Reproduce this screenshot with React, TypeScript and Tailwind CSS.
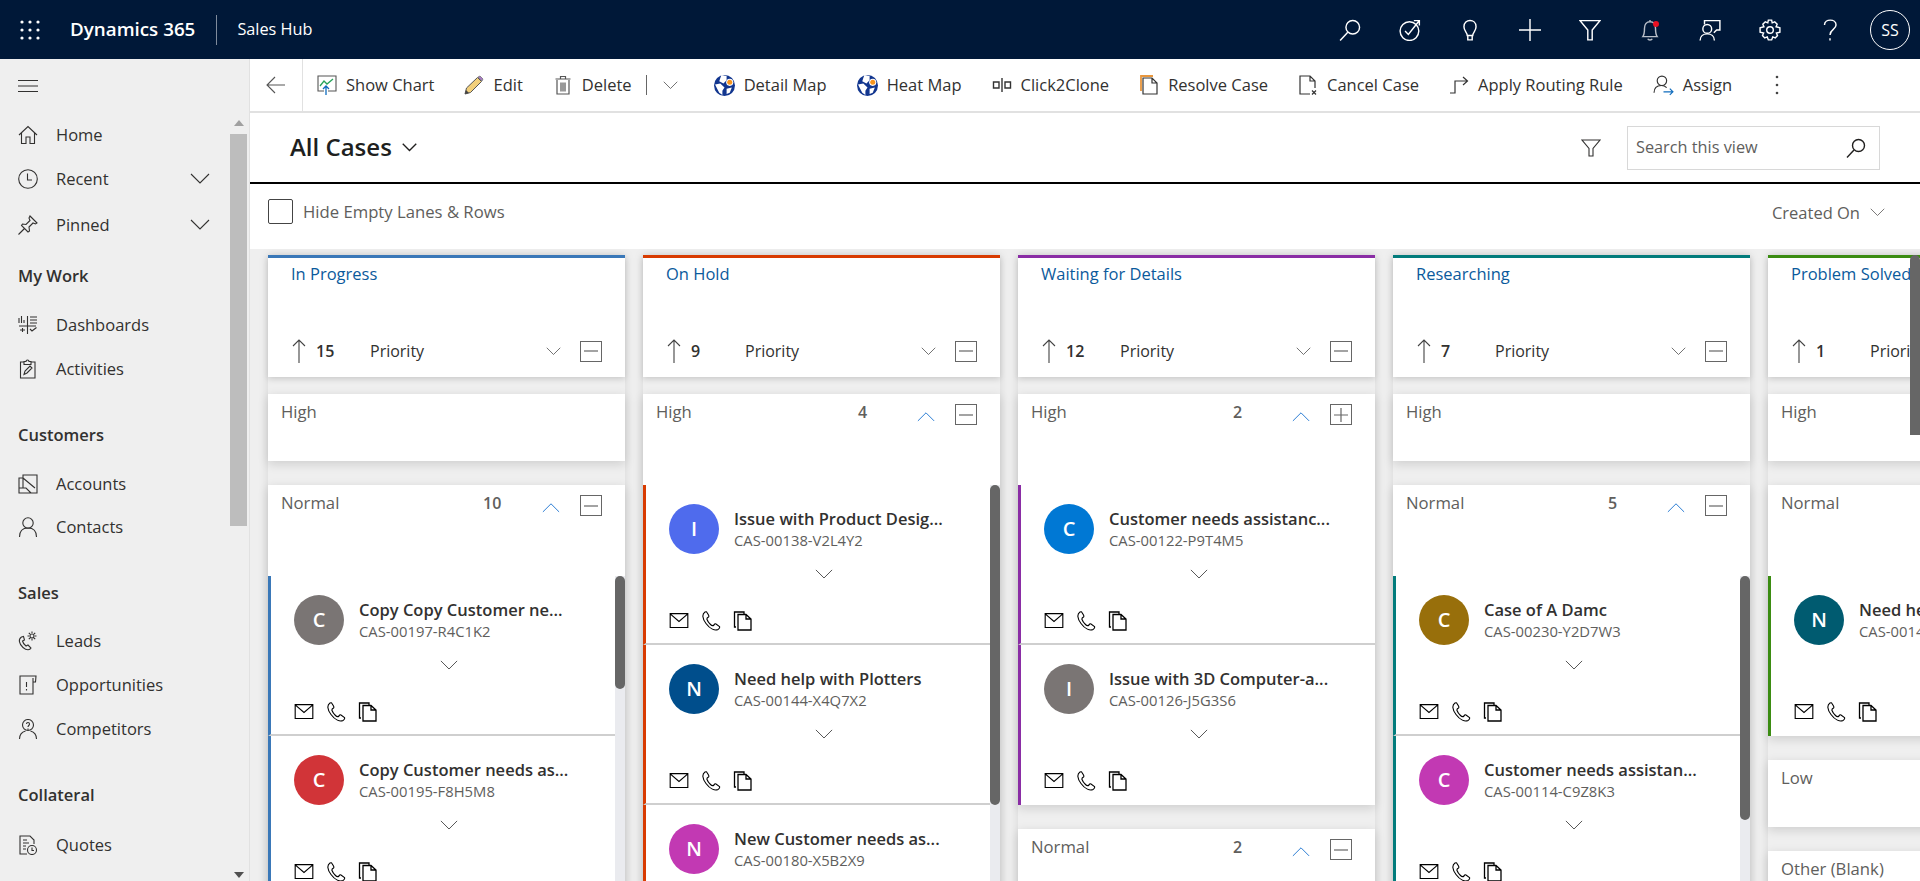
import { ReactNode } from "react";

const font = { fontFamily: '"Open Sans", "Noto Sans", sans-serif' };

function Ico({ children, size = 20, className = "", sw = 1.2 }: { children: ReactNode; size?: number; className?: string; sw?: number }) {
  return (
    <svg viewBox="0 0 20 20" width={size} height={size} fill="none" stroke="currentColor" strokeWidth={sw} className={`shrink-0 ${className}`}>
      {children}
    </svg>
  );
}

function Chevron({ size = 20, up = false, className = "", sw = 1.1 }: { size?: number; up?: boolean; className?: string; sw?: number }) {
  return (
    <svg viewBox="0 0 20 12" width={size} height={(size * 12) / 20} fill="none" stroke="currentColor" strokeWidth={sw} className={`shrink-0 ${className}`}>
      <path d={up ? "M1 11 L10 2 L19 11" : "M1 1 L10 10 L19 1"} />
    </svg>
  );
}

function Globe() {
  return (
    <svg viewBox="0 0 20 20" width={21} height={21} className="shrink-0">
      <circle cx="10" cy="10" r="10" fill="#12368f" />
      <path d="M7 0 L12 1 L12 5 L9 8 L5 6 Z M1 9 L6 8 L10 12 L8 15 L8 19 L5 17 L3 13 Z M12 13 L17 12 L15 17 L12 18 Z" fill="#ffffff" />
      <circle cx="15" cy="7" r="3.4" fill="#ffffff" />
      <circle cx="15" cy="7" r="2.4" fill="#f7941d" />
    </svg>
  );
}

const toolbarItems: { label: string; icon: ReactNode }[] = [
  {
    label: "Show Chart",
    icon: (
      <svg viewBox="0 0 20 20" width={20} height={20} fill="none" className="shrink-0">
        <path d="M7 16 H1 V1 H19 V16 H11" stroke="#555" strokeWidth="1.1" />
        <path d="M3 11 L7 6 L10 9 L16 4" stroke="#27a35a" strokeWidth="1.3" />
        <path d="M9 20 V11 M6 14 L9 11 L12 14" stroke="#0f6cbd" strokeWidth="1.3" />
      </svg>
    ),
  },
  {
    label: "Edit",
    icon: (
      <svg viewBox="0 0 20 20" width={20} height={20} className="shrink-0">
        <path d="M1 19 L2.5 13 L13.5 2.5 L17.5 6.5 L6.5 17.5 Z" fill="#f2cf7a" stroke="#555" strokeWidth="1" />
        <path d="M14 2 L16 1 L19 4 L18 6 Z" fill="#a878c8" stroke="#777" strokeWidth="0.8" />
        <path d="M1 19 L2 15 L5 18 Z" fill="#444" />
      </svg>
    ),
  },
  {
    label: "Delete",
    icon: (
      <Ico className="text-[#555]">
        <path d="M4 5 V19 H16 V5 M2.5 4 H17.5 M7.5 4 V1.5 H12.5 V4 M8 7.5 V16.5 M10 7.5 V16.5 M12 7.5 V16.5" />
      </Ico>
    ),
  },
];

const toolbarRest: { label: string; icon: ReactNode }[] = [
  { label: "Detail Map", icon: <Globe /> },
  { label: "Heat Map", icon: <Globe /> },
  {
    label: "Click2Clone",
    icon: (
      <Ico className="text-[#333]" sw={1.4}>
        <path d="M10 3 V17 M1.5 7 H7 V13 H1.5 Z M13 7 H18.5 V13 H13 Z" />
      </Ico>
    ),
  },
  {
    label: "Resolve Case",
    icon: (
      <svg viewBox="0 0 20 20" width={20} height={20} fill="none" className="shrink-0">
        <path d="M2 16 V1 H14" stroke="#e8963c" strokeWidth="1.8" />
        <path d="M4 19 V3 H13 L18 8 V19 Z M13 3 V8 H18" stroke="#333" strokeWidth="1.2" fill="#fff" />
      </svg>
    ),
  },
  {
    label: "Cancel Case",
    icon: (
      <Ico className="text-[#333]">
        <path d="M12 19 H2 V1 H12 L17 6 V13 M12 1 V6 H17 M14 15.5 L18 19.5 M18 15.5 L14 19.5" />
      </Ico>
    ),
  },
  {
    label: "Apply Routing Rule",
    icon: (
      <Ico className="text-[#333]">
        <path d="M1 18 H6 V6 H18 M14 2 L18.5 6 L14 10" />
      </Ico>
    ),
  },
  {
    label: "Assign",
    icon: (
      <svg viewBox="0 0 20 20" width={21} height={21} fill="none" className="shrink-0">
        <circle cx="8.5" cy="5.5" r="4.5" stroke="#333" strokeWidth="1.1" />
        <path d="M1 17 C1 12 4 10 8 10 C10 10 12 11 13 12" stroke="#333" strokeWidth="1.1" />
        <path d="M10 16 H19 M16 13 L19 16 L16 19" stroke="#0f6cbd" strokeWidth="1.1" />
      </svg>
    ),
  },
];

const navIcons: Record<string, ReactNode> = {
  Home: <path d="M1 10 L10 1.5 L19 10 M3.5 8 V18.5 H8 V12 H12 V18.5 H16.5 V8" />,
  Recent: (
    <>
      <circle cx="10" cy="10" r="9.3" />
      <path d="M9.5 4.5 V11 H14" />
    </>
  ),
  Pinned: <path d="M12 1 L19 8 L17.5 9 L15 8 L11 12 L11.5 16 L10 17 L3.5 10.5 L4.5 9 L8 9.5 L12 5.5 L11 3 Z M6.5 13.5 L0.5 19.5" />,
  Dashboards: <path d="M1 8 V3 M3.5 8 V1 M6 8 V5 M9.5 1 V19 M12 2 H19 M12 5 H19 M12 8 H19 M1 11 H18 M2 15 H7 M4.5 13 V17 M12 14 L14 16 L18.5 12.5" />,
  Activities: <path d="M6 3 H2.5 V19 H17 V3 H13 M6 5.5 V2.5 H8 C8 0.5 11 0.5 11 2.5 H13 V5.5 Z M6 15.5 L7 12 L12 7 L14 9 L9 14 Z" />,
  Accounts: <path d="M5 14 V1 H19 V19 H1 V4 H5 M5 4 L17 14 M1 14 H8 L13 19" />,
  Contacts: (
    <>
      <circle cx="10" cy="6" r="5.2" />
      <path d="M1.5 20 C1.5 14 5 11 10 11 C15 11 18.5 14 18.5 20" />
    </>
  ),
  Leads: (
    <>
      <path d="M3.5 6 C0 8 1 13 5 16.5 C9 20 12 19 13 17 L10 14 L8 15 C6.5 14 5 12 4.5 10 L6.5 9 L5.5 5.5 Z" />
      <circle cx="14" cy="5" r="2" />
      <path d="M14 .5 V2 M14 8 V9.5 M9.5 5 H11 M17 5 H18.5 M10.8 1.8 L12 3 M16 7 L17.2 8.2 M17.2 1.8 L16 3 M12 7 L10.8 8.2" />
    </>
  ),
  Opportunities: <path d="M15 3 V19 H2 V1 H18 L17.5 7 L15.5 7 M8.5 7 V12 M8.5 14 V15.5" />,
  Competitors: (
    <>
      <circle cx="10" cy="6" r="5.5" />
      <path d="M1.5 20 C1.5 15 4 13 7.5 12 M18.5 20 C18.5 15 16 13 12.5 12 M8.5 5 C8.5 3 11.5 3 11.5 5 C11.5 6.5 10 6.5 10 8 M10 9.5 V11" />
    </>
  ),
  Quotes: (
    <>
      <path d="M9 19 H2 V1 H12 L16 5 V9 M5 5 H9 M5 8 H11 M5 11 H8 M5 14 H8" />
      <circle cx="14" cy="15" r="4.5" />
      <path d="M14 12.5 V15.5 H16" />
    </>
  ),
};

function NavItem({ label, chevron = false, className = "" }: { label: string; chevron?: boolean; className?: string }) {
  return (
    <div className={`flex h-[44px] items-center pr-[20px] pl-[18px] text-[#323130] ${className}`}>
      <Ico className="text-[#323130]" sw={1.1}>
        {navIcons[label]}
      </Ico>
      <span className="ml-[18px] flex-1 text-[16.5px]">{label}</span>
      {chevron && <Chevron className="text-[#323130]" />}
    </div>
  );
}

function NavHeading({ label, className = "" }: { label: string; className?: string }) {
  return <div className={`flex h-[44px] items-center pl-[18px] text-[16.5px] font-semibold text-[#323130] ${className}`}>{label}</div>;
}

function Sidebar() {
  return (
    <aside className="flex h-full w-[250px] shrink-0 border-r border-[#e1e1e1] bg-[#efefef]">
      <div className="w-[230px] overflow-hidden">
        <div className="mb-[1px] flex h-[53px] items-center pl-[18px]">
          <svg viewBox="0 0 20 14" width={20} height={14} stroke="#323130" strokeWidth="1">
            <path d="M0 1.5 H20 M0 7 H20 M0 12.5 H20" />
          </svg>
        </div>
        <NavItem label="Home" />
        <NavItem label="Recent" chevron />
        <NavItem label="Pinned" chevron className="mt-[2px]" />
        <NavHeading label="My Work" className="mt-[7px] mb-[5px]" />
        <NavItem label="Dashboards" />
        <NavItem label="Activities" />
        <NavHeading label="Customers" className="mt-[22px] mb-[5px]" />
        <NavItem label="Accounts" />
        <NavItem label="Contacts" className="mt-[-1px]" />
        <NavHeading label="Sales" className="mt-[22px] mb-[4px]" />
        <NavItem label="Leads" />
        <NavItem label="Opportunities" />
        <NavItem label="Competitors" />
        <NavHeading label="Collateral" className="mt-[22px] mb-[6px]" />
        <NavItem label="Quotes" />
      </div>
      <div className="flex w-[17px] flex-col items-center">
        <div className="mt-[61px] mb-[8px] h-0 w-0 border-x-[5px] border-b-[6px] border-x-transparent border-b-[#a0a0a0]" />
        <div className="h-[392px] w-full bg-[#bdbdbd]" />
        <div className="mt-auto mb-[3px] h-0 w-0 border-x-[5px] border-t-[6px] border-x-transparent border-t-[#505050]" />
      </div>
    </aside>
  );
}

function HeaderBar() {
  const wc = "text-white";
  const icons: ReactNode[] = [
    <Ico className={wc} size={22} sw={1.3} key="s"><circle cx="12.5" cy="7.5" r="6.2" /><path d="M8 12 L1 19.5" /></Ico>,
    <Ico className={wc} size={22} sw={1.3} key="t"><circle cx="9.5" cy="11" r="8.5" /><path d="M5.5 11 L8.5 14 L18 2 M13.5 1.5 H18.5 V6" /></Ico>,
    <Ico className={wc} size={22} sw={1.3} key="b"><path d="M7.5 15 C7.5 12 4.5 11 4.5 7 C4.5 -0.5 15.5 -0.5 15.5 7 C15.5 11 12.5 12 12.5 15 Z M8 15 V19 H12 V15" /></Ico>,
    <Ico className={wc} size={22} sw={1.3} key="p"><path d="M10 0 V20 M0 10 H20" /></Ico>,
    <Ico className={wc} size={22} sw={1.3} key="f"><path d="M1 1.5 H19 L12 10 V19 H8 V10 Z" /></Ico>,
    <span className="relative" key="n">
      <Ico className="text-[#b9bfc9]" size={22} sw={1.3}><path d="M3.5 16 C5 14 5 12 5 8.5 C5 4.5 7 2.5 10 2.5 C13 2.5 15 4.5 15 8.5 C15 12 15 14 16.5 16 Z M8 18 C8.5 19.5 11.5 19.5 12 18 M10 2.5 V1" /></Ico>
      <span className="absolute top-[2px] right-[2px] h-[6px] w-[6px] rounded-full bg-[#e81123]" />
    </span>,
    <Ico className={wc} size={22} sw={1.3} key="c"><path d="M5 5 V1.5 H19 V10 H16 L13.5 12.5" /><circle cx="7.5" cy="9" r="4" /><path d="M1 19.5 C1 15.5 4 13.5 7.5 13.5 C11 13.5 14 15.5 14 19.5" /></Ico>,
    <Ico className={wc} size={22} sw={1.3} key="g"><circle cx="10" cy="10" r="3" /><path d="M8.5 1 H11.5 L12 3.5 L14.3 2.5 L16.5 4.7 L15.5 7 L19 8 V12 L15.8 12.8 L16.8 15 L14.8 17.2 L12.5 16.3 L11.5 19 H8.5 L7.5 16.3 L5.2 17.2 L3.2 15 L4.2 12.8 L1 12 V8 L4.5 7 L3.5 4.7 L5.7 2.5 L8 3.5 Z" /></Ico>,
    <Ico className={wc} size={22} sw={1.3} key="h"><path d="M5 5.5 C5 -0.5 15.5 -0.5 15.5 5.5 C15.5 9.5 10 9.5 10 14.5 M10 17.5 V19.5" /></Ico>,
  ];
  return (
    <header className="flex h-[59px] shrink-0 items-center bg-[#001838] text-white">
      <svg viewBox="0 0 20 20" width={20} height={20} fill="#fff" className="ml-[20px]">
        {[2, 10, 18].map((y) => [2, 10, 18].map((x) => <circle key={`${x}-${y}`} cx={x} cy={y} r="1.6" />))}
      </svg>
      <span className="ml-[30px] text-[18.8px] font-semibold">Dynamics 365</span>
      <span className="ml-[21px] h-[30px] w-px bg-[#7f8b9c]" />
      <span className="ml-[20px] text-[16.3px]">Sales Hub</span>
      <div className="ml-auto flex items-center">
        {icons.map((icon, i) => (
          <div key={i} className="flex w-[60px] justify-center">
            {icon}
          </div>
        ))}
        <div className="flex w-[60px] justify-center">
          <div className="flex h-[40px] w-[40px] items-center justify-center rounded-full border border-white text-[16px]">SS</div>
        </div>
      </div>
    </header>
  );
}

function ToolbarBtn({ label, icon }: { label: string; icon: ReactNode }) {
  return (
    <div className="flex items-center gap-[9px]">
      {icon}
      <span className="text-[16.5px] text-[#323130]">{label}</span>
    </div>
  );
}

function Toolbar() {
  return (
    <div className="flex h-[54px] shrink-0 items-center border-b-2 border-[#e1e1e1] bg-white">
      <div className="flex h-full w-[53px] items-center justify-center border-r border-[#e1e1e1]">
        <svg viewBox="0 0 20 20" width={20} height={20} fill="none" stroke="#555" strokeWidth="1.1">
          <path d="M19 10 H1 M9 2 L1 10 L9 18" />
        </svg>
      </div>
      <div className="ml-[14px] flex items-center gap-[30px]">
        {toolbarItems.map((t) => (
          <ToolbarBtn key={t.label} {...t} />
        ))}
      </div>
      <span className="ml-[14px] h-[20px] w-px bg-[#666]" />
      <Chevron size={15} className="ml-[16px] text-[#555]" />
      <div className="ml-[36px] flex items-center gap-[30px]">
        {toolbarRest.map((t) => (
          <ToolbarBtn key={t.label} label={t.label} icon={t.icon} />
        ))}
      </div>
      <svg viewBox="0 0 4 20" width={4} height={20} fill="#444" className="ml-[43px]">
        <circle cx="2" cy="2" r="1.3" />
        <circle cx="2" cy="10" r="1.3" />
        <circle cx="2" cy="18" r="1.3" />
      </svg>
    </div>
  );
}

function TitleRow() {
  return (
    <div className="flex h-[71px] shrink-0 items-center border-b-2 border-black bg-white pr-[40px] pl-[40px]">
      <h1 className="mb-[2px] text-[24px] font-semibold text-[#201f1e]">All Cases</h1>
      <Chevron size={15} sw={1.8} className="ml-[10px] text-[#201f1e]" />
      <Ico className="ml-auto text-[#323130]" sw={1.1}>
        <path d="M1 2 H19 L12 10.5 V18 H8 V10.5 Z" />
      </Ico>
      <div className="ml-[26px] flex h-[44px] w-[253px] items-center border border-[#d8d8d8] pr-[13px] pl-[8px]">
        <span className="flex-1 text-[16.3px] text-[#605e5c]">Search this view</span>
        <Ico className="text-[#201f1e]" sw={1.4}>
          <circle cx="12.5" cy="7.5" r="6" />
          <path d="M8 12 L1 19.5" />
        </Ico>
      </div>
    </div>
  );
}

function FilterRow() {
  return (
    <div className="flex h-[65px] shrink-0 items-center bg-white pr-[35px] pb-[10px] pl-[18px]">
      <div className="h-[25px] w-[25px] rounded-[2px] border border-[#444]" />
      <span className="ml-[10px] text-[16.7px] text-[#605e5c]">Hide Empty Lanes &amp; Rows</span>
      <span className="mt-[4px] ml-auto text-[16.5px] text-[#605e5c]">Created On</span>
      <Chevron size={15} className="mt-[2px] ml-[10px] text-[#605e5c]" />
    </div>
  );
}

function BoxBtn({ plus = false, className = "" }: { plus?: boolean; className?: string }) {
  return (
    <div className={`flex h-[21px] w-[22px] shrink-0 items-center justify-center border border-[#666] ${className}`}>
      <svg viewBox="0 0 14 14" width={14} height={14} stroke="#666" strokeWidth="1.2">
        <path d={plus ? "M0 7 H14 M7 0 V14" : "M0 7 H14"} />
      </svg>
    </div>
  );
}

type CaseCard = { initial: string; color: string; title: string; id: string };

function CardRow({ card, color, last }: { card: CaseCard; color: string; last?: boolean }) {
  return (
    <div className={`h-[160px] border-l-[3px] bg-white ${last ? "" : "border-b-2 border-b-[#cfcfcf]"}`} style={{ borderLeftColor: color }}>
      <div className="flex pt-[19px] pl-[23px]">
        <div
          className="flex h-[50px] w-[50px] shrink-0 items-center justify-center rounded-full text-[20px] font-semibold text-white"
          style={{ backgroundColor: card.color }}
        >
          {card.initial}
        </div>
        <div className="ml-[15px] min-w-0 whitespace-nowrap">
          <div className="mt-[4px] text-[16.5px] leading-[22px] font-semibold text-[#323130]">{card.title}</div>
          <div className="text-[14.8px] leading-[20px] text-[#605e5c]">{card.id}</div>
        </div>
      </div>
      <Chevron size={18} className="mt-[15px] ml-[169px] text-[#555]" />
      <div className="mt-[31px] flex items-center gap-[12px] pl-[23px] text-black">
        <svg viewBox="0 0 20 16" width={20} height={15} fill="none" stroke="currentColor" strokeWidth="1.2">
          <path d="M.6.6 H19.4 V15.4 H.6 Z M.6 1 L10 9 L19.4 1" />
        </svg>
        <Ico sw={1.1}>
          <path d="M4 1 C1 3 1 7 5 12.5 C9 18 14 20 17 18.5 C18.5 17.5 19 16.5 18.5 15.5 L15 13 C14 12.5 13.5 13 13 14 C12 15 11 15 9.5 13.5 C8 12 6.5 10 6 8.5 C5.5 7 6.5 6.5 7.5 6 C8 5.5 8 5 7.5 4 L6 1.5 C5.5 .5 5 .5 4 1 Z" />
        </Ico>
        <Ico sw={1.3}>
          <path d="M3 16 H1.5 V1 H11 V3 M5 19 V3.5 H13 L18 8 V19 Z M13 3.5 V8 H18" />
        </Ico>
      </div>
    </div>
  );
}

type Lane = {
  label: string;
  count?: number;
  plus?: boolean;
  cards?: CaseCard[];
  thumb?: number;
  scroller?: boolean;
};

function LaneBlock({ lane, color }: { lane: Lane; color: string }) {
  const hasCards = !!lane.cards?.length;
  return (
    <div className="bg-white shadow-[0_3px_10px_rgba(0,0,0,0.14)]">
      <div className={`flex items-start bg-white pt-[6px] pr-[23px] pl-[13px] ${hasCards || lane.count ? "h-[91px]" : "h-[67px]"}`}>
        <span className="flex-1 text-[16.7px] leading-[24px] text-[#605e5c]">{lane.label}</span>
        {lane.count !== undefined && (
          <>
            <span className="mr-[35px] w-[24px] text-[16px] leading-[24px] font-semibold text-[#605e5c]">{lane.count}</span>
            <Chevron size={18} up className="mt-[11px] mr-[20px] text-[#2b7cd3]" />
            <BoxBtn plus={lane.plus} className="mt-[4px]" />
          </>
        )}
      </div>
      {hasCards && (
        <div className="flex">
          <div className="min-w-0 flex-1">
            {lane.cards!.map((c, i) => (
              <CardRow key={c.id} card={c} color={color} last={!lane.scroller && i === lane.cards!.length - 1} />
            ))}
          </div>
          {lane.scroller && (
            <div className="w-[10px] shrink-0 bg-[#eaebef]">
              <div className="w-full rounded-[5px] bg-[#666]" style={{ height: lane.thumb }} />
            </div>
          )}
        </div>
      )}
    </div>
  );
}

type Col = { title: string; color: string; total: number; lanes: Lane[] };

const columns: Col[] = [
  {
    title: "In Progress",
    color: "#3a78b8",
    total: 15,
    lanes: [
      { label: "High" },
      {
        label: "Normal",
        count: 10,
        scroller: true,
        thumb: 113,
        cards: [
          { initial: "C", color: "#7a7574", title: "Copy Copy Customer ne...", id: "CAS-00197-R4C1K2" },
          { initial: "C", color: "#d13438", title: "Copy Customer needs as...", id: "CAS-00195-F8H5M8" },
        ],
      },
    ],
  },
  {
    title: "On Hold",
    color: "#d83b01",
    total: 9,
    lanes: [
      {
        label: "High",
        count: 4,
        scroller: true,
        thumb: 320,
        cards: [
          { initial: "I", color: "#4f6bed", title: "Issue with Product Desig...", id: "CAS-00138-V2L4Y2" },
          { initial: "N", color: "#004e8c", title: "Need help with Plotters", id: "CAS-00144-X4Q7X2" },
          { initial: "N", color: "#c239b3", title: "New Customer needs as...", id: "CAS-00180-X5B2X9" },
        ],
      },
    ],
  },
  {
    title: "Waiting for Details",
    color: "#8a2da5",
    total: 12,
    lanes: [
      {
        label: "High",
        count: 2,
        plus: true,
        cards: [
          { initial: "C", color: "#0078d4", title: "Customer needs assistanc...", id: "CAS-00122-P9T4M5" },
          { initial: "I", color: "#7a7574", title: "Issue with 3D Computer-a...", id: "CAS-00126-J5G3S6" },
        ],
      },
      { label: "Normal", count: 2 },
    ],
  },
  {
    title: "Researching",
    color: "#037c7c",
    total: 7,
    lanes: [
      { label: "High" },
      {
        label: "Normal",
        count: 5,
        scroller: true,
        thumb: 244,
        cards: [
          { initial: "C", color: "#986f0b", title: "Case of A Damc", id: "CAS-00230-Y2D7W3" },
          { initial: "C", color: "#c239b3", title: "Customer needs assistan...", id: "CAS-00114-C9Z8K3" },
        ],
      },
    ],
  },
  {
    title: "Problem Solved",
    color: "#3b8c12",
    total: 1,
    lanes: [
      { label: "High" },
      {
        label: "Normal",
        count: 1,
        cards: [{ initial: "N", color: "#005b70", title: "Need help with Plotters", id: "CAS-00144-X4Q7X2" }],
      },
      { label: "Low" },
      { label: "Other (Blank)" },
    ],
  },
];

function Column({ col }: { col: Col }) {
  return (
    <div className="flex w-[357px] shrink-0 flex-col gap-[24px] shadow-[0_0_10px_rgba(0,0,0,0.1)]">
      <div className="mb-[-7px] h-[122px] border-t-[3px] bg-white shadow-[0_2px_6px_rgba(0,0,0,0.16)]" style={{ borderTopColor: col.color }}>
        <div className="pt-[4px] pl-[23px] text-[16.5px] leading-[24px] text-[#0b5a9c]">{col.title}</div>
        <div className="mt-[53px] flex h-[24px] items-center pr-[23px] pl-[23px]">
          <svg viewBox="0 0 16 24" width={16} height={24} fill="none" stroke="#444" strokeWidth="1.1" className="shrink-0">
            <path d="M8 24 V1 M2 7 L8 1 L14 7" />
          </svg>
          <span className="ml-[9px] w-[54px] text-[16px] font-semibold text-[#323130]">{col.total}</span>
          <span className="flex-1 text-[16px] text-[#323130]">Priority</span>
          <Chevron size={15} className="mr-[19px] text-[#555]" />
          <BoxBtn />
        </div>
      </div>
      {col.lanes.map((l) => (
        <LaneBlock key={l.label} lane={l} color={col.color} />
      ))}
    </div>
  );
}

export default function App() {
  return (
    <div className="flex h-[881px] w-[1920px] flex-col overflow-hidden bg-white" style={font}>
      <HeaderBar />
      <div className="flex min-h-0 flex-1">
        <Sidebar />
        <main className="flex min-w-0 flex-1 flex-col">
          <Toolbar />
          <TitleRow />
          <FilterRow />
          <div className="relative min-h-0 flex-1 overflow-hidden bg-[#efefef] pt-[6px] pl-[18px]">
            <div className="flex items-start gap-[18px]">
              {columns.map((c) => (
                <Column key={c.title} col={c} />
              ))}
            </div>
            {/* page level scrollbar over the board */}
            <div className="absolute top-[6px] right-0 h-[180px] w-[10px] rounded-t-[5px] bg-[#666]" />
          </div>
        </main>
      </div>
    </div>
  );
}
